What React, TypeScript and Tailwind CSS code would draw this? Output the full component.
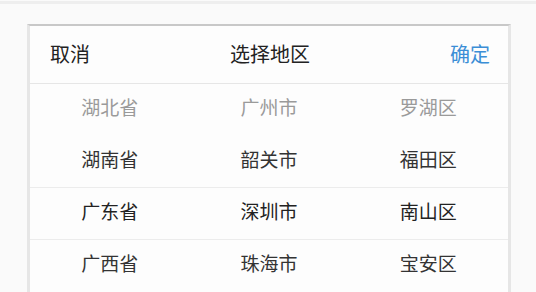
import React from 'react';

const rows = [
  { cells: ['湖北省', '广州市', '罗湖区'], tone: 'text-[#9a9a9a]', line: false },
  { cells: ['湖南省', '韶关市', '福田区'], tone: 'text-[#333]', line: true },
  { cells: ['广东省', '深圳市', '南山区'], tone: 'text-[#222]', line: true },
  { cells: ['广西省', '珠海市', '宝安区'], tone: 'text-[#333]', line: false },
];

export default function App() {
  return (
    <div
      className="w-[536px] h-[292px] overflow-hidden bg-[#fafafa]"
      style={{ fontFamily: '"Noto Sans CJK SC", "Liberation Sans", sans-serif' }}
    >
      <div className="h-[3px] bg-[#eeeeee] mt-[1px]" />
      <div className="ml-[27px] mr-[25px] mt-[20px] bg-[#fdfdfd] border-l-[3px] border-r-[3px] border-t-2 border-l-[#e6e6e6] border-r-[#e6e6e6] border-t-[#c8c8c8]">
        <div className="h-[58px] flex items-center justify-between pl-5 pr-[18px] pb-[2px] border-b border-[#e6e6e6] text-[20px]">
          <span className="w-[80px] text-[#222]">取消</span>
          <span className="text-[#222]">选择地区</span>
          <span className="w-[80px] text-right text-[#3b8ed6]">确定</span>
        </div>
        {rows.map((r, i) => (
          <div
            key={i}
            className={`grid grid-cols-3 h-[52px] items-center pb-[5px] text-[19px] ${r.tone} ${r.line ? 'border-b border-[#ececec]' : ''}`}
          >
            {r.cells.map((c) => (
              <span key={c} className="text-center">{c}</span>
            ))}
          </div>
        ))}
      </div>
    </div>
  );
}
